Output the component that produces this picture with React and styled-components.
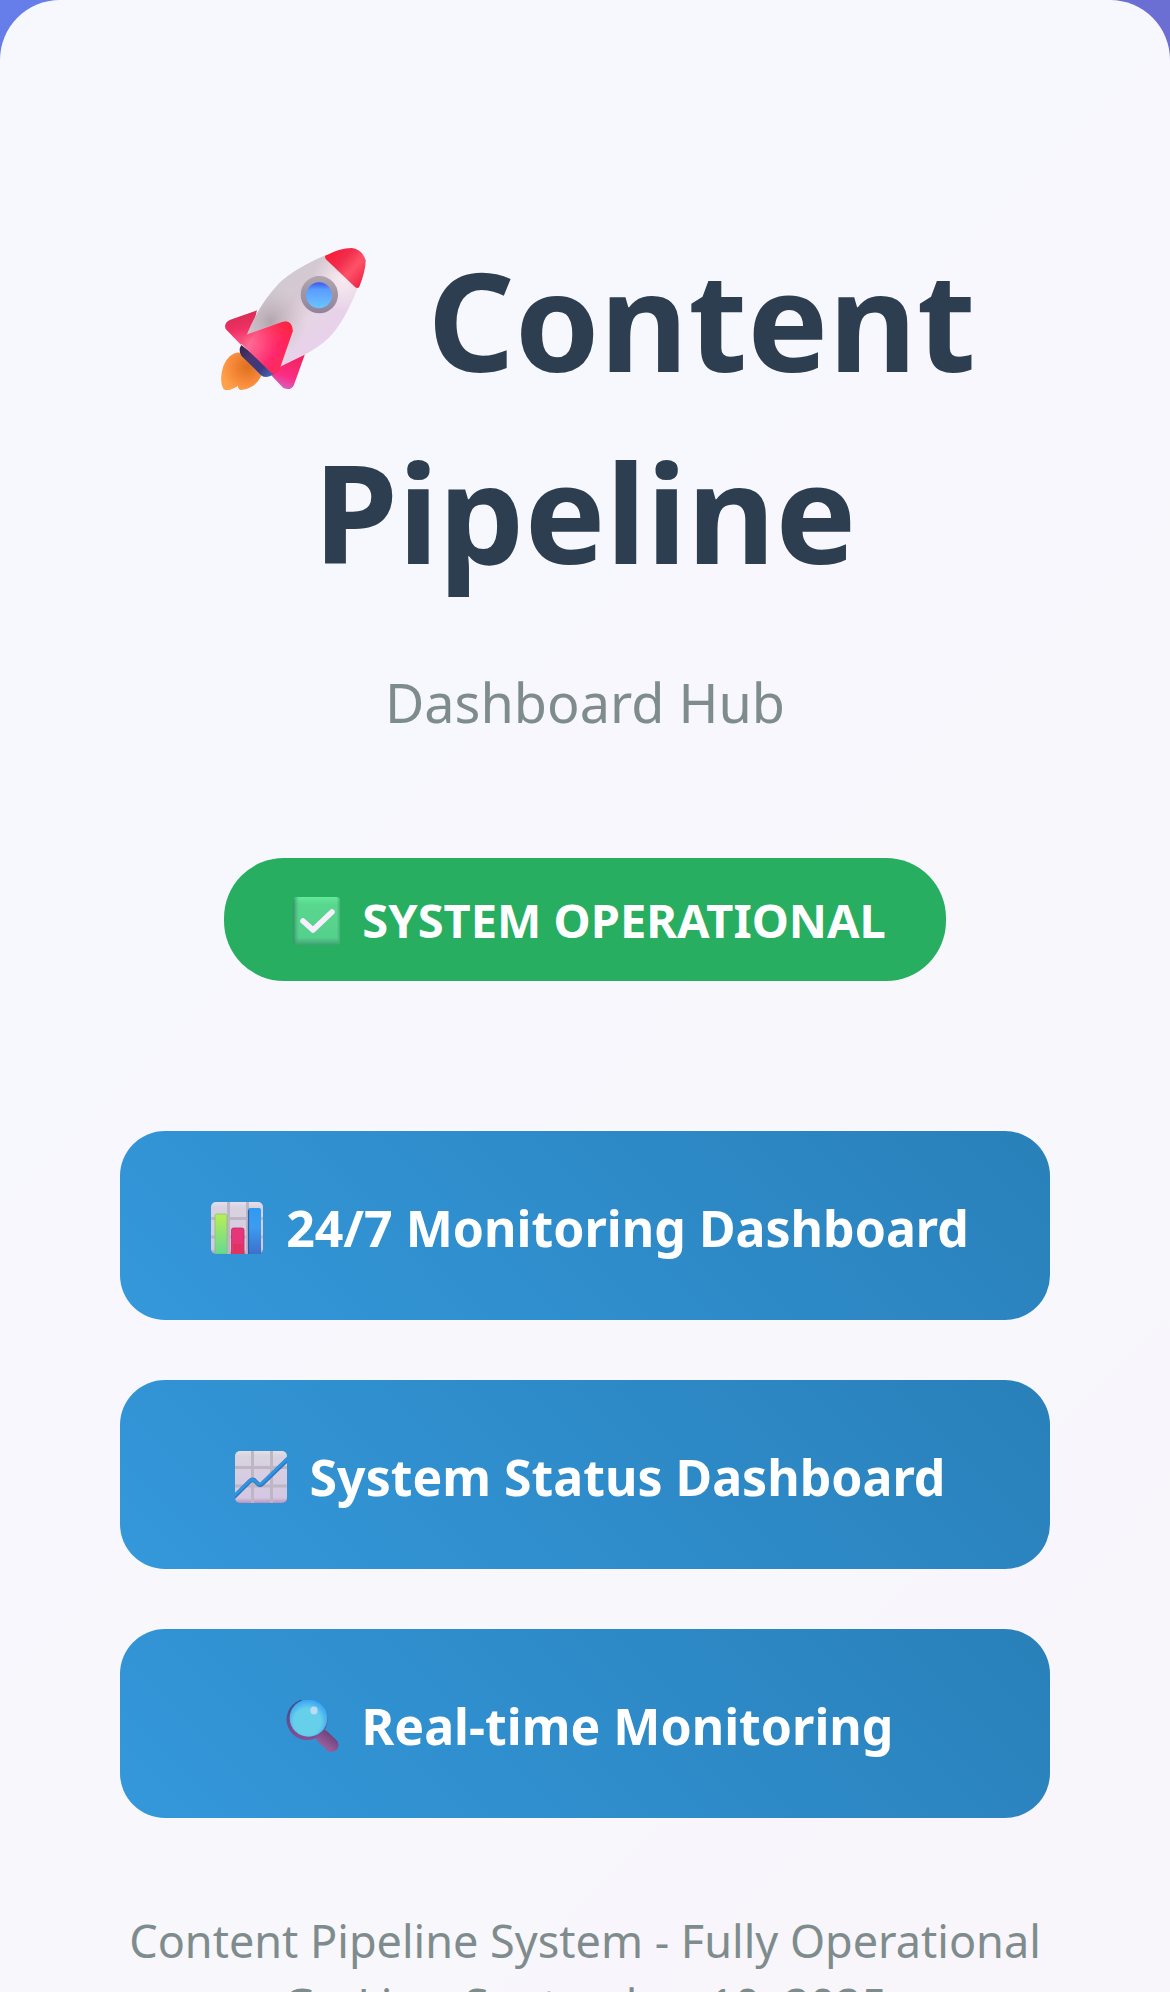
import React from "react";
import styled, { createGlobalStyle } from "styled-components";

const GlobalStyle = createGlobalStyle`
  *, *::before, *::after { box-sizing: border-box; }
  html { height: 100%; }
  body {
    margin: 0;
    height: 100%;
    overflow: hidden;
    font-family: "Segoe UI", "Noto Sans", sans-serif;
  }
  #root { height: 100%; }
`;

const Page = styled.div`
  height: 100%;
  overflow: hidden;
  background: #667eea;
`;

const Backdrop = styled.div`
  background: linear-gradient(135deg, #667eea 0%, #764ba2 100%);
`;

const Card = styled.main`
  min-height: 127vh;
  padding: 224px 120px 120px;
  border-radius: 60px;
  background: rgba(255, 255, 255, 0.95);
  display: flex;
  flex-direction: column;
  align-items: center;
  text-align: center;
`;

const Title = styled.h1`
  margin: 0 0 56px;
  font-size: 136px;
  line-height: 192px;
  font-weight: 700;
  color: #2c3e50;
`;

const Subtitle = styled.p`
  margin: 0 0 118px;
  font-size: 54px;
  line-height: 76px;
  color: #7f8c8d;
`;

const Badge = styled.div`
  margin-bottom: 150px;
  padding: 30px 60px 29px;
  border-radius: 60px;
  background: #27ae60;
  color: #fff;
  font-size: 47px;
  line-height: 64px;
  font-weight: 700;
`;

const Links = styled.nav`
  align-self: stretch;
  display: flex;
  flex-direction: column;
  gap: 60px;
  margin-bottom: 91px;
`;

const LinkButton = styled.a`
  padding: 63px 60px 57px;
  border-radius: 45px;
  background: linear-gradient(45deg, #3498db, #2980b9);
  color: #fff;
  font-size: 50px;
  line-height: 69px;
  font-weight: 700;
  text-decoration: none;
`;

const Footer = styled.footer`
  font-size: 45px;
  line-height: 64px;
  color: #7f8c8d;
  white-space: nowrap;
`;

const Icon = styled.svg`
  width: ${(p) => p.$width}px;
  height: ${(p) => p.$height}px;
  vertical-align: ${(p) => p.$drop}px;
`;

function Rocket() {
  return (
    <Icon $width={198} $height={144} $drop={-18} viewBox="-15 48 594 432" aria-hidden="true">
      <defs>
        <linearGradient id="r-body" x1="190" y1="170" x2="370" y2="370" gradientUnits="userSpaceOnUse">
          <stop offset="0" stopColor="#cfcbcf" />
          <stop offset="0.35" stopColor="#d7c8d3" />
          <stop offset="0.6" stopColor="#e6d5e4" />
          <stop offset="1" stopColor="#e8d0ee" />
        </linearGradient>
        <radialGradient id="r-shade" cx="215" cy="275" r="110" gradientUnits="userSpaceOnUse">
          <stop offset="0" stopColor="#aa9ca2" stopOpacity="0.8" />
          <stop offset="1" stopColor="#c8bcc4" stopOpacity="0" />
        </radialGradient>
        <radialGradient id="r-light" cx="430" cy="150" r="90" gradientUnits="userSpaceOnUse">
          <stop offset="0" stopColor="#f8eaf1" />
          <stop offset="1" stopColor="#f8eaf1" stopOpacity="0" />
        </radialGradient>
        <linearGradient id="r-nose" x1="405" y1="65" x2="500" y2="150" gradientUnits="userSpaceOnUse">
          <stop offset="0" stopColor="#f71f3a" />
          <stop offset="0.3" stopColor="#f12e4e" />
          <stop offset="0.6" stopColor="#ff5268" />
          <stop offset="1" stopColor="#ef2546" />
        </linearGradient>
        <linearGradient id="r-glass" x1="360" y1="155" x2="360" y2="235" gradientUnits="userSpaceOnUse">
          <stop offset="0" stopColor="#3454ee" />
          <stop offset="0.3" stopColor="#5b9dff" />
          <stop offset="1" stopColor="#6bc4ff" />
        </linearGradient>
        <linearGradient id="r-ring" x1="360" y1="137" x2="360" y2="250" gradientUnits="userSpaceOnUse">
          <stop offset="0" stopColor="#b1a5ad" />
          <stop offset="1" stopColor="#8f839b" />
        </linearGradient>
        <linearGradient id="r-fin" x1="140" y1="310" x2="265" y2="390" gradientUnits="userSpaceOnUse">
          <stop offset="0" stopColor="#f44c75" />
          <stop offset="0.18" stopColor="#ff6a94" />
          <stop offset="0.4" stopColor="#ff5185" />
          <stop offset="0.7" stopColor="#ff286c" />
          <stop offset="1" stopColor="#ff2a55" />
        </linearGradient>
        <linearGradient id="r-tip" x1="268" y1="275" x2="215" y2="370" gradientUnits="userSpaceOnUse">
          <stop offset="0" stopColor="#ff2438" />
          <stop offset="1" stopColor="#ff2060" stopOpacity="0" />
        </linearGradient>
        <linearGradient id="r-back" x1="110" y1="255" x2="130" y2="340" gradientUnits="userSpaceOnUse">
          <stop offset="0" stopColor="#d92d55" />
          <stop offset="0.5" stopColor="#ef2f62" />
          <stop offset="1" stopColor="#ff578b" />
        </linearGradient>
        <linearGradient id="r-low" x1="300" y1="380" x2="265" y2="478" gradientUnits="userSpaceOnUse">
          <stop offset="0" stopColor="#f0245d" />
          <stop offset="0.65" stopColor="#fc2c83" />
          <stop offset="1" stopColor="#d560bd" />
        </linearGradient>
        <radialGradient id="r-flame" cx="145" cy="410" r="80" gradientUnits="userSpaceOnUse">
          <stop offset="0" stopColor="#dd711d" />
          <stop offset="0.6" stopColor="#f7893a" />
          <stop offset="1" stopColor="#ffa14b" />
        </radialGradient>
        <linearGradient id="r-base" x1="125" y1="355" x2="215" y2="440" gradientUnits="userSpaceOnUse">
          <stop offset="0" stopColor="#36264e" />
          <stop offset="0.3" stopColor="#4b3570" />
          <stop offset="0.7" stopColor="#3b3a80" />
          <stop offset="1" stopColor="#4767b5" />
        </linearGradient>
      </defs>
      <path d="M120 367Q88 370 73 408Q60 449 72 475Q78 484 93 479Q111 473 117 467Q116 480 127 480Q170 475 187 437Z" fill="url(#r-flame)" />
      <path d="M174 241L94 269Q73 278 80 297L126 345L160 298Z" fill="url(#r-back)" />
      <path d="M318 372L285 464Q276 484 253 474L218 437L245 407Z" fill="url(#r-low)" />
      <path d="M143 315Q180 223 240 160Q286 116 379 76L476 173Q438 273 389 324Q359 352 317 374L240 412Z" fill="url(#r-body)" />
      <path d="M143 315Q180 223 240 160Q286 116 379 76L476 173Q438 273 389 324Q359 352 317 374L240 412Z" fill="url(#r-shade)" />
      <path d="M143 315Q180 223 240 160Q286 116 379 76L476 173Q438 273 389 324Q359 352 317 374L240 412Z" fill="url(#r-light)" />
      <path d="M379 77Q421 55 458 54Q489 57 500 91Q500 123 481 170Q476 177 468 171L380 87Q377 81 379 77Z" fill="url(#r-nose)" />
      <circle cx="361" cy="194" r="56" fill="url(#r-ring)" />
      <circle cx="360" cy="196" r="39" fill="url(#r-glass)" />
      <path d="M127 345Q117 360 127 377L184 434Q196 447 220 436L232 427Z" fill="url(#r-base)" />
      <path d="M136 316L250 276Q280 269 281 304L245 409Q237 437 217 429L130 344Q116 328 136 316Z" fill="url(#r-fin)" />
      <path d="M136 316L250 276Q280 269 281 304L245 409Q237 437 217 429L130 344Q116 328 136 316Z" fill="url(#r-tip)" />
    </Icon>
  );
}

function CheckMark() {
  return (
    <Icon $width={66} $height={48} $drop={-7} viewBox="0 0 66 48" aria-hidden="true">
      <defs>
        <linearGradient id="c-fill" x1="0" y1="0" x2="0" y2="1">
          <stop offset="0" stopColor="#64ea98" />
          <stop offset="0.15" stopColor="#59d78f" />
          <stop offset="0.85" stopColor="#55d08c" />
          <stop offset="1" stopColor="#3f9f72" />
        </linearGradient>
        <linearGradient id="c-edge" x1="0" y1="0" x2="1" y2="0">
          <stop offset="0" stopColor="#378d66" />
          <stop offset="0.13" stopColor="#48b77d" stopOpacity="0" />
          <stop offset="0.93" stopColor="#48b77d" stopOpacity="0" />
          <stop offset="1" stopColor="#43b078" />
        </linearGradient>
      </defs>
      <rect x="9" y="0" width="47" height="48" rx="4" fill="url(#c-fill)" />
      <rect x="9" y="0" width="47" height="48" rx="4" fill="url(#c-edge)" />
      <path d="M19 24L29 33L48 15" fill="none" stroke="#f7effb" strokeWidth="5.6" strokeLinecap="round" strokeLinejoin="round" />
    </Icon>
  );
}

function ChartSheet({ id }) {
  return (
    <>
      <defs>
        <linearGradient id={id} x1="0" y1="0" x2="0" y2="1">
          <stop offset="0" stopColor="#e5dfe8" />
          <stop offset="0.1" stopColor="#d8d3e0" />
          <stop offset="0.9" stopColor="#d5c7e2" />
          <stop offset="1" stopColor="#b895bd" />
        </linearGradient>
      </defs>
      <rect x="10" y="0" width="52" height="52" rx="5" fill={`url(#${id})`} />
      <path d="M27.5 0V52M46.5 0V52M10 16.5H62M10 35H62" stroke="#beb5c5" strokeWidth="3" />
    </>
  );
}

function BarChart() {
  return (
    <Icon $width={72} $height={52} $drop={-7} viewBox="0 0 72 52" aria-hidden="true">
      <defs>
        <linearGradient id="b-green" x1="0" y1="0" x2="0" y2="1">
          <stop offset="0" stopColor="#b9ef54" />
          <stop offset="1" stopColor="#65d995" />
        </linearGradient>
        <linearGradient id="b-blue" x1="0" y1="0" x2="0" y2="1">
          <stop offset="0" stopColor="#3298ef" />
          <stop offset="0.4" stopColor="#3b9df2" />
          <stop offset="1" stopColor="#3c70cb" />
        </linearGradient>
      </defs>
      <ChartSheet id="b-sheet" />
      <path d="M14 52V14Q14 12 16 12H24Q26 12 26 14V52Z" fill="url(#b-green)" stroke="#78b86b" strokeWidth="0.6" />
      <path d="M30.5 52V28Q30.5 26 32.5 26H41Q43 26 43 28V52Z" fill="#e7357a" stroke="#ba2f61" strokeWidth="0.8" />
      <path d="M32 52V42H42V52Z" fill="#df345f" />
      <path d="M47 52V8Q47 6 49 6H58Q60 6 60 8V52Z" fill="url(#b-blue)" />
      <path d="M47.5 52V8" stroke="#2860a4" strokeWidth="1.2" />
    </Icon>
  );
}

function LineChart() {
  return (
    <Icon $width={72} $height={52} $drop={-7} viewBox="0 0 72 52" aria-hidden="true">
      <defs>
        <clipPath id="l-clip"><rect x="10" width="52" height="52" rx="5" /></clipPath>
      </defs>
      <ChartSheet id="l-sheet" />
      <g clipPath="url(#l-clip)" fill="none" strokeLinejoin="round">
        <path d="M8 47L25 30Q27 28 29 29L33 33Q35 35 37 33L64 7" stroke="#2c77c3" strokeWidth="4.4" />
        <path d="M8 46L25 29.5Q27 28 29 29L33 33Q35 34 37 32L64 6" stroke="#3095df" strokeWidth="2.6" />
      </g>
    </Icon>
  );
}

function Magnifier() {
  return (
    <Icon $width={72} $height={52} $drop={-7} viewBox="0 0 72 52" aria-hidden="true">
      <defs>
        <radialGradient id="m-glass" cx="0.47" cy="0.6" r="0.6">
          <stop offset="0.6" stopColor="#66cfea" />
          <stop offset="1" stopColor="#35a0f5" />
        </radialGradient>
        <linearGradient id="m-rim" x1="0" y1="0" x2="0" y2="1">
          <stop offset="0" stopColor="#384e86" />
          <stop offset="1" stopColor="#874e94" />
        </linearGradient>
        <linearGradient id="m-grip" x1="55" y1="32" x2="46" y2="44" gradientUnits="userSpaceOnUse">
          <stop offset="0" stopColor="#693d74" />
          <stop offset="1" stopColor="#945c99" />
        </linearGradient>
      </defs>
      <path d="M45.5 36.5L54.5 45" stroke="url(#m-grip)" strokeWidth="14" strokeLinecap="round" />
      <circle cx="30" cy="19.5" r="20.5" fill="url(#m-rim)" />
      <circle cx="31.5" cy="18" r="18.8" fill="url(#m-glass)" />
      <ellipse cx="37" cy="10.5" rx="3.6" ry="4" fill="#bddcf3" />
    </Icon>
  );
}

const links = [
  { label: "24/7 Monitoring Dashboard", Glyph: BarChart },
  { label: "System Status Dashboard", Glyph: LineChart },
  { label: "Real-time Monitoring", Glyph: Magnifier },
];

export default function App() {
  return (
    <Page>
      <GlobalStyle />
      <Backdrop>
        <Card>
          <Title><Rocket /> Content Pipeline</Title>
          <Subtitle>Dashboard Hub</Subtitle>
          <Badge><CheckMark /> SYSTEM OPERATIONAL</Badge>
          <Links>
            {links.map(({ label, Glyph }) => (
              <LinkButton key={label} href="#"><Glyph /> {label}</LinkButton>
            ))}
          </Links>
          <Footer>
            Content Pipeline System - Fully Operational
            <br />
            Go-Live: September 10, 2025
          </Footer>
        </Card>
      </Backdrop>
    </Page>
  );
}
